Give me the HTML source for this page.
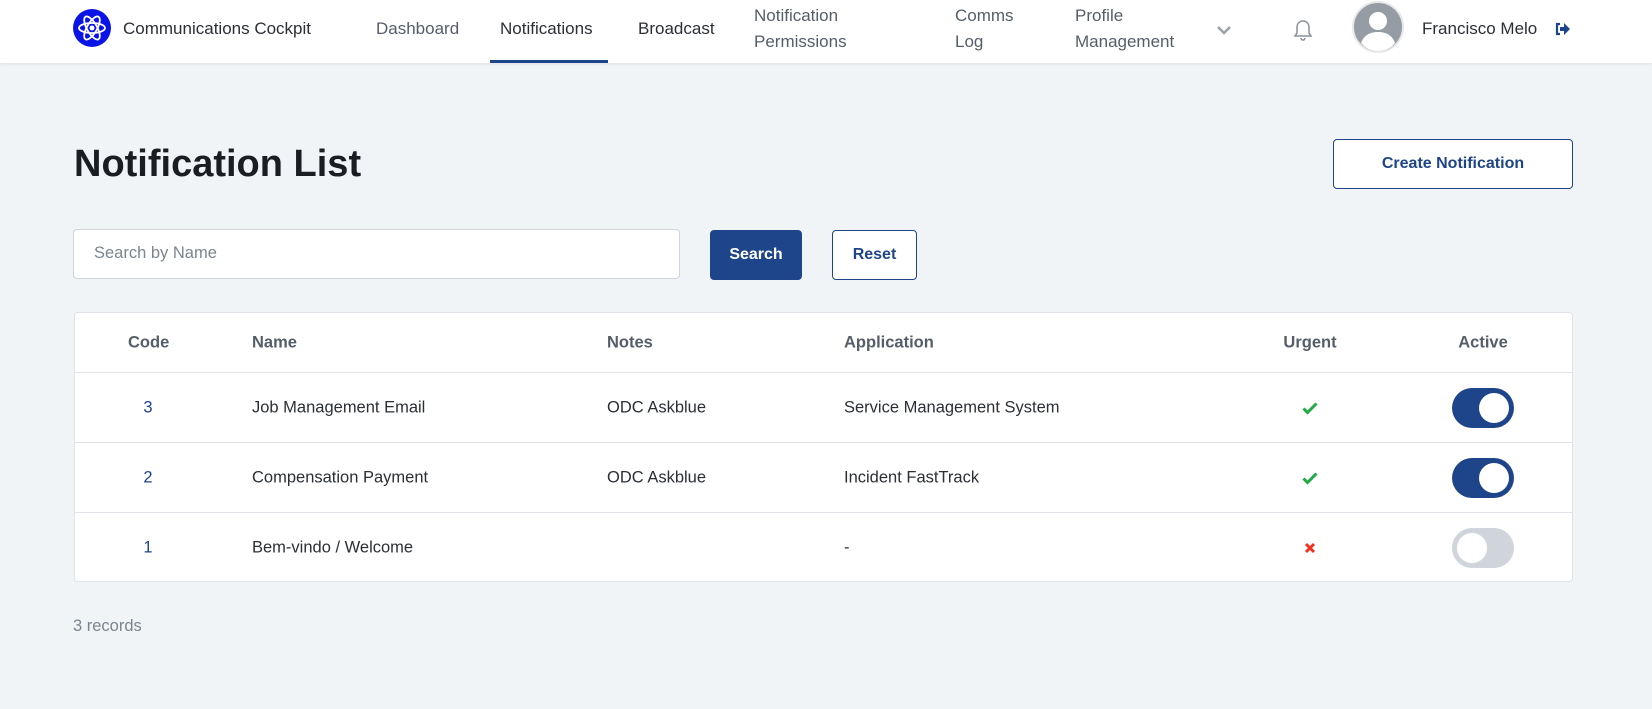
<!DOCTYPE html>
<html><head><meta charset="utf-8">
<style>
*{box-sizing:border-box;margin:0;padding:0}
body{width:1652px;height:709px;background:#f1f4f7;font-family:"Liberation Sans",sans-serif;color:#212529;position:relative;overflow:hidden}
.nav{position:absolute;left:0;top:0;width:1652px;height:63px;background:#fff;box-shadow:0 1px 3px rgba(0,0,0,.08)}
.a{position:absolute;font-size:17px;color:#555e68;line-height:26px}
.dark{color:#2b3035}
h1{position:absolute;left:74px;top:143px;font-size:38px;font-weight:bold;color:#1a1d21}
.btn{position:absolute;border:1px solid #1e4589;border-radius:4px;color:#1e4589;font-weight:bold;font-size:16px;display:flex;align-items:center;justify-content:center;background:#fff}
.table{position:absolute;left:74px;top:312px;width:1499px;height:270px;background:#fff;border:1px solid #dfe2e6;border-radius:4px}
.row{position:absolute;left:0;width:100%;border-top:1px solid #dfe2e6}
.c{position:absolute;font-size:16.5px;color:#2b3035;top:50%;transform:translateY(-50%)}
.h{font-weight:bold;color:#555e68}
.tg{position:absolute;left:1377px;top:50%;margin-top:-20px;width:62px;height:40px;border-radius:20px;background:#1e4589}
.tg::after{content:"";position:absolute;left:27px;top:5px;width:30px;height:30px;border-radius:50%;background:#fff}
.tg.off{background:#d0d5db}
.tg.off::after{left:5px}
</style></head><body>
<div class="nav">
 <svg style="position:absolute;left:73px;top:9px" width="38" height="38" viewBox="0 0 38 38"><circle cx="19" cy="19" r="19" fill="#0a14e6"/><g fill="none" stroke="#fff" stroke-width="1.8"><ellipse cx="19" cy="19" rx="13" ry="5"/><ellipse cx="19" cy="19" rx="13" ry="5" transform="rotate(60 19 19)"/><ellipse cx="19" cy="19" rx="13" ry="5" transform="rotate(-60 19 19)"/></g><circle cx="19" cy="19" r="2.5" fill="#fff"/></svg>
 <div class="a dark" style="left:123px;top:16px">Communications Cockpit</div>
 <div class="a" style="left:376px;top:16px">Dashboard</div>
 <div class="a dark" style="left:500px;top:16px">Notifications</div>
 <div style="position:absolute;left:490px;top:60px;width:118px;height:3px;background:#1e4589"></div>
 <div class="a dark" style="left:638px;top:16px">Broadcast</div>
 <div class="a" style="left:754px;top:3px">Notification<br>Permissions</div>
 <div class="a" style="left:955px;top:3px">Comms<br>Log</div>
 <div class="a" style="left:1075px;top:3px">Profile<br>Management</div>
 <svg style="position:absolute;left:1216px;top:24px" width="16" height="12" viewBox="0 0 16 12"><path d="M2 3l6 6 6-6" fill="none" stroke="#9aa1a8" stroke-width="2.5"/></svg>
 <svg style="position:absolute;left:1293px;top:18px" width="20" height="24" viewBox="0 0 20 24"><path d="M10 3c-4 0-6 3-6 7v5l-2 3h16l-2-3v-5c0-4-2-7-6-7zM8 20a2 2 0 004 0" fill="none" stroke="#8a9097" stroke-width="1.5"/></svg>
 <svg style="position:absolute;left:1352px;top:1px" width="52" height="52" viewBox="0 0 52 52"><circle cx="26" cy="26" r="25" fill="#959ca3" stroke="#e6e8ea" stroke-width="2"/><circle cx="26" cy="20" r="9" fill="#fff"/><path d="M9 42c3-8 9-11 17-11s14 3 17 11c-4 5-10 8-17 8s-13-3-17-8z" fill="#fff"/></svg>
 <div class="a dark" style="left:1422px;top:16px">Francisco Melo</div>
 <svg style="position:absolute;left:1554px;top:21px" width="16" height="16" viewBox="0 0 16 16"><path d="M6 3H3v10h3" fill="none" stroke="#1e4589" stroke-width="2.2"/><path d="M6 6h4V2l6 6-6 6v-4H6z" fill="#1e4589"/></svg>
</div>
<h1>Notification List</h1>
<div class="btn" style="left:1333px;top:139px;width:240px;height:50px">Create Notification</div>
<div style="position:absolute;left:73px;top:229px;width:607px;height:50px;background:#fff;border:1px solid #ced4da;border-radius:4px;font-size:16.5px;color:#7c858d;padding:14px 0 0 20px">Search by Name</div>
<div class="btn" style="left:710px;top:230px;width:92px;height:50px;background:#1e4589;color:#fff">Search</div>
<div class="btn" style="left:832px;top:230px;width:85px;height:50px">Reset</div>
<div class="table">
 <div class="row" style="top:0;height:59px;border-top:none">
  <div class="c h" style="left:53px;width:40px;text-align:center">Code</div>
  <div class="c h" style="left:177px">Name</div>
  <div class="c h" style="left:532px">Notes</div>
  <div class="c h" style="left:769px">Application</div>
  <div class="c h" style="left:1200px;width:70px;text-align:center">Urgent</div>
  <div class="c h" style="left:1373px;width:70px;text-align:center">Active</div>
 </div>
 <div class="row" style="top:59px;height:70px">
  <div class="c" style="left:53px;width:40px;text-align:center;color:#1e4589">3</div>
  <div class="c" style="left:177px">Job Management Email</div>
  <div class="c" style="left:532px">ODC Askblue</div>
  <div class="c" style="left:769px">Service Management System</div>
  <svg class="c" style="left:1227px" width="16" height="13" viewBox="0 0 16 13"><path d="M1.5 7l4 4L14.5 2" fill="none" stroke="#22aa44" stroke-width="3"/></svg>
  <div class="tg"></div>
 </div>
 <div class="row" style="top:129px;height:70px">
  <div class="c" style="left:53px;width:40px;text-align:center;color:#1e4589">2</div>
  <div class="c" style="left:177px">Compensation Payment</div>
  <div class="c" style="left:532px">ODC Askblue</div>
  <div class="c" style="left:769px">Incident FastTrack</div>
  <svg class="c" style="left:1227px" width="16" height="13" viewBox="0 0 16 13"><path d="M1.5 7l4 4L14.5 2" fill="none" stroke="#22aa44" stroke-width="3"/></svg>
  <div class="tg"></div>
 </div>
 <div class="row" style="top:199px;height:70px">
  <div class="c" style="left:53px;width:40px;text-align:center;color:#1e4589">1</div>
  <div class="c" style="left:177px">Bem-vindo / Welcome</div>
  <div class="c" style="left:769px">-</div>
  <svg class="c" style="left:1229px" width="12" height="12" viewBox="0 0 12 12"><path d="M2 2l8 8M10 2l-8 8" stroke="#ee3322" stroke-width="3"/></svg>
  <div class="tg off"></div>
 </div>
</div>
<div style="position:absolute;left:73px;top:617px;font-size:16.5px;color:#7c858d">3 records</div>
</body></html>
